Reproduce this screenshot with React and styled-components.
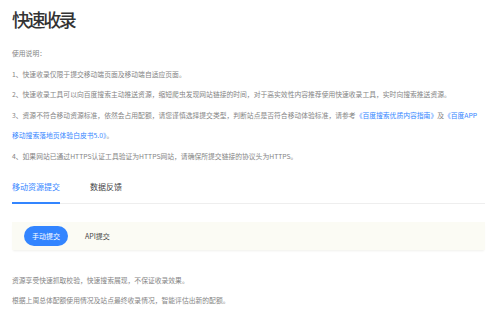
import React from 'react';
import styled, {createGlobalStyle} from 'styled-components';

const blue_color = "#3385ff";
const text_color = "#858585";
const title_color = "#333";
const panel_color = "#fbfbf4";
const line_color = "#eeeeee";
const font_family = "'Noto Sans CJK SC', 'Noto Sans', sans-serif";

const Global = createGlobalStyle`
  html, body{
    margin: 0;
    padding: 0;
    background: #fff;
  }
  body{
    font-family: ${font_family};
  }
`;

const Page = styled.div`
  width: 500px;
  height: 320px;
  box-sizing: border-box;
  padding: 7px 15px 0 12px;
  overflow: hidden;
`;

const Title = styled.h1`
  margin: 0;
  font-size: 18px;
  line-height: 24px;
  font-weight: 500;
  letter-spacing: -2.4px;
  color: ${title_color};
`;

const Notes = styled.div`
  margin-top: 12px;
  font-size: 6.8px;
  line-height: 20.5px;
  color: ${text_color};
  white-space: nowrap;
`;

const Link = styled.span`
  color: ${blue_color};
`;

const Tabs = styled.div`
  margin-top: 15px;
  display: flex;
  gap: 30px;
  border-bottom: 1px solid ${line_color};
`;

const Tab = styled.div`
  font-size: 8px;
  line-height: 12px;
  padding-bottom: 9px;
  margin-bottom: -1px;
  color: ${props => props.active ? blue_color : "#444"};
  border-bottom: 2px solid ${props => props.active ? blue_color : "transparent"};
`;

const Panel = styled.div`
  margin-top: 18px;
  display: flex;
  align-items: center;
  gap: 17px;
  padding: 4px 12px;
  background-color: ${panel_color};
  box-shadow: 0 2px 2px -1px #f0f0ec;
`;

const Pill = styled.div`
  height: 20px;
  display: flex;
  align-items: center;
  border-radius: 10px;
  font-size: 7px;
  color: ${props => props.active ? "#fff" : "#444"};
  background-color: ${props => props.active ? blue_color : "transparent"};
  padding: ${props => props.active ? "0 8px" : "0"};
`;

const Info = styled.div`
  margin-top: 21px;
  font-size: 6.8px;
  line-height: 19.5px;
  color: ${text_color};
  white-space: nowrap;
`;

export default function App() {
  return (
    <Page>
      <Global />
      <Title>快速收录</Title>
      <Notes>
        <div>使用说明：</div>
        <div>1、快速收录仅限于提交移动端页面及移动端自适应页面。</div>
        <div>2、快速收录工具可以向百度搜索主动推送资源，缩短爬虫发现网站链接的时间，对于高实效性内容推荐使用快速收录工具，实时向搜索推送资源。</div>
        <div>
          3、资源不符合移动资源标准，依然会占用配额，请您谨慎选择提交类型，判断站点是否符合移动体验标准，请参考<Link>《百度搜索优质内容指南》</Link>及<Link>《百度APP<br />移动搜索落地页体验白皮书5.0》</Link>。
        </div>
        <div>4、如果网站已通过HTTPS认证工具验证为HTTPS网站，请确保所提交链接的协议头为HTTPS。</div>
      </Notes>
      <Tabs>
        <Tab active>移动资源提交</Tab>
        <Tab>数据反馈</Tab>
      </Tabs>
      <Panel>
        <Pill active>手动提交</Pill>
        <Pill>API提交</Pill>
      </Panel>
      <Info>
        <div>资源享受快速抓取校验，快速搜索展现，不保证收录效果。</div>
        <div>根据上周总体配额使用情况及站点最终收录情况，智能评估出新的配额。</div>
      </Info>
    </Page>
  );
}
